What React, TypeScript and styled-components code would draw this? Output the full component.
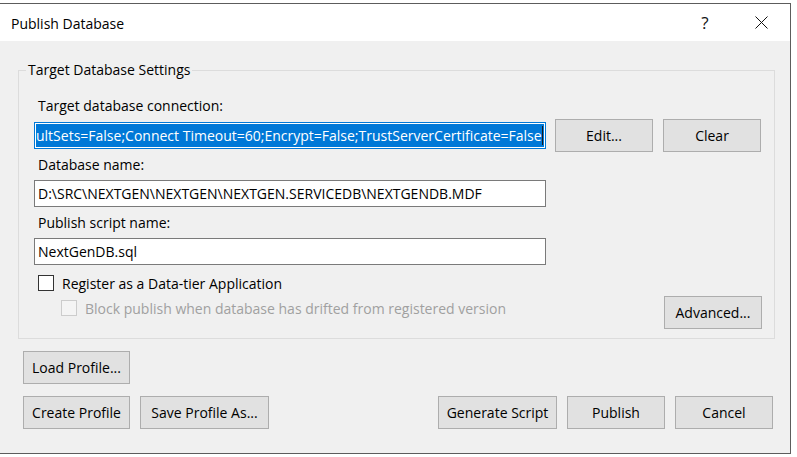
import React from "react";
import styled, { createGlobalStyle } from "styled-components";

const FONT = `"Open Sans", "Noto Sans", sans-serif`;

const Global = createGlobalStyle`
  html, body { margin: 0; padding: 0; background: #ffffff; }
  body { font-family: ${FONT}; font-size: 14px; color: #000; }
  #root { padding-top: 3px; }
  * { box-sizing: border-box; }
`;

const Window = styled.div`
  width: 791px;
  height: 451px;
  border: 1px solid #5c5c5c;
  border-left: none;
  background: #f0f0f0;
  display: flex;
  flex-direction: column;
`;

const TitleBar = styled.div`
  height: 37px;
  background: #ffffff;
  display: flex;
  align-items: center;
  padding-left: 11px;
  flex-shrink: 0;
`;

const TitleText = styled.div`
  font-size: 14px;
  flex: 1;
  padding-top: 1px;
`;

const CaptionButton = styled.div<{ $w: number }>`
  width: ${(p) => p.$w}px;
  height: 37px;
  display: flex;
  align-items: center;
  justify-content: center;
  font-size: 17px;
  color: #111;
`;

const CaptionGroup = styled.div`
  display: flex;
  gap: 10px;
  margin-right: 6px;
`;

const Group = styled.fieldset`
  margin: 19px 15px 0 18px;
  border: 1px solid #dcdcdc;
  padding: 0 12px 9px 15px;
  min-width: 0;
  display: flex;
  flex-direction: column;
`;

const Legend = styled.legend`
  font-size: 14px;
  line-height: 20px;
  padding: 0 2px;
  margin-left: -8px;
`;

const Label = styled.div<{ $mt: number }>`
  font-size: 14px;
  line-height: 20px;
  height: 20px;
  padding-left: 4px;
  margin-top: ${(p) => p.$mt}px;
`;

const Row = styled.div<{ $mt: number }>`
  display: flex;
  align-items: center;
  gap: 9px;
  margin-top: ${(p) => p.$mt}px;
`;

const TextBox = styled.div<{ $focused?: boolean }>`
  width: 512px;
  height: 27px;
  border: 1px solid ${(p) => (p.$focused ? "#0078d7" : "#7a7a7a")};
  background: #ffffff;
  display: flex;
  align-items: center;
  padding: ${(p) => (p.$focused ? "1px" : "0 3px")};
  white-space: nowrap;
  overflow: hidden;
  font-size: 14px;
  flex-shrink: 0;
`;

const Selection = styled.span`
  flex: 1;
  height: 100%;
  background: #0078d7;
  color: #ffffff;
  display: flex;
  align-items: center;
  overflow: hidden;
  position: relative;
  &::after {
    content: "";
    position: absolute;
    right: 1px;
    top: 2px;
    bottom: 2px;
    width: 1px;
    background: #1a1a1a;
  }
`;

const ButtonGroup = styled.div`
  display: flex;
  gap: 10px;
`;

const Button = styled.div<{ $w: number }>`
  width: ${(p) => p.$w}px;
  height: 33px;
  border: 1px solid #adadad;
  background: #e1e1e1;
  display: flex;
  align-items: center;
  justify-content: center;
  font-size: 14px;
  color: #000;
  flex-shrink: 0;
`;

const CheckRow = styled.div<{ $mt: number; $indent: number; $disabled?: boolean }>`
  display: flex;
  align-items: center;
  gap: 8px;
  height: 20px;
  margin-top: ${(p) => p.$mt}px;
  padding-left: ${(p) => p.$indent}px;
  color: ${(p) => (p.$disabled ? "#a0a0a0" : "#000")};
  font-size: 14px;
`;

const CheckBox = styled.div<{ $disabled?: boolean }>`
  width: 16px;
  height: 16px;
  border: 1px solid ${(p) => (p.$disabled ? "#cccccc" : "#333333")};
  background: ${(p) => (p.$disabled ? "#f4f4f4" : "#ffffff")};
  flex-shrink: 0;
`;

const LastRow = styled.div`
  display: flex;
  justify-content: space-between;
  align-items: flex-start;
  margin-top: 3px;
`;

const Footer = styled.div`
  display: flex;
  flex-direction: column;
  gap: 12px;
  padding: 12px 17px 0 23px;
`;

const FooterRow = styled.div`
  display: flex;
  align-items: center;
`;

const Spacer = styled.div`
  flex: 1;
`;

function CloseIcon() {
  return (
    <svg width="13" height="13" viewBox="0 0 13 13">
      <path d="M0.5 0.5 L12.5 12.5 M12.5 0.5 L0.5 12.5" stroke="#111" strokeWidth="1" fill="none" />
    </svg>
  );
}

export default function App() {
  return (
    <>
      <Global />
      <Window>
        <TitleBar>
          <TitleText>Publish Database</TitleText>
          <CaptionGroup>
            <CaptionButton $w={46}>?</CaptionButton>
            <CaptionButton $w={46}>
              <CloseIcon />
            </CaptionButton>
          </CaptionGroup>
        </TitleBar>

        <Group>
          <Legend>Target Database Settings</Legend>
          <Label $mt={16}>Target database connection:</Label>
          <Row $mt={3}>
            <TextBox $focused>
              <Selection>ultSets=False;Connect Timeout=60;Encrypt=False;TrustServerCertificate=False</Selection>
            </TextBox>
            <ButtonGroup>
              <Button $w={98}>Edit...</Button>
              <Button $w={98}>Clear</Button>
            </ButtonGroup>
          </Row>
          <Label $mt={3}>Database name:</Label>
          <Row $mt={5}>
            <TextBox>D:\SRC\NEXTGEN\NEXTGEN\NEXTGEN.SERVICEDB\NEXTGENDB.MDF</TextBox>
          </Row>
          <Label $mt={6}>Publish script name:</Label>
          <Row $mt={5}>
            <TextBox>NextGenDB.sql</TextBox>
          </Row>
          <CheckRow $mt={8} $indent={4}>
            <CheckBox />
            Register as a Data-tier Application
          </CheckRow>
          <LastRow>
            <CheckRow $mt={2} $indent={27} $disabled>
              <CheckBox $disabled />
              Block publish when database has drifted from registered version
            </CheckRow>
            <Button $w={98}>Advanced...</Button>
          </LastRow>
        </Group>

        <Footer>
          <FooterRow>
            <Button $w={107}>Load Profile...</Button>
          </FooterRow>
          <FooterRow>
            <ButtonGroup>
              <Button $w={107}>Create Profile</Button>
              <Button $w={129}>Save Profile As...</Button>
            </ButtonGroup>
            <Spacer />
            <ButtonGroup>
              <Button $w={119}>Generate Script</Button>
              <Button $w={98}>Publish</Button>
              <Button $w={98}>Cancel</Button>
            </ButtonGroup>
          </FooterRow>
        </Footer>
      </Window>
    </>
  );
}
